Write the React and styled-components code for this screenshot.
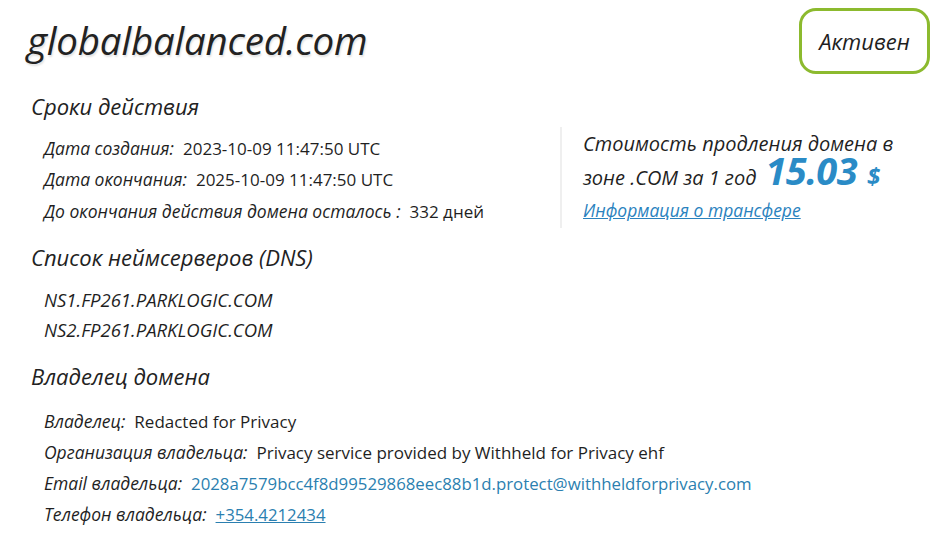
import React from 'react'
import styled, { createGlobalStyle } from 'styled-components'

const GlobalStyle = createGlobalStyle`
  html, body {
    margin: 0;
    padding: 0;
    background: #fff;
  }
  body {
    font-family: 'Open Sans', 'Noto Sans', sans-serif;
    color: #1f1f1f;
  }
`

const Page = styled.div`
  width: 943px;
  height: 539px;
  box-sizing: border-box;
  padding: 8px 13px 0 27px;
  overflow: hidden;
`

const Header = styled.div`
  display: flex;
  justify-content: space-between;
  align-items: flex-start;
`

const DomainTitle = styled.h1`
  margin: 7px 0 0;
  font-size: 38.5px;
  line-height: 50px;
  font-style: italic;
  font-weight: 500;
  letter-spacing: -0.2px;
  color: #222;
  text-shadow: 1px 2px 2px rgba(0, 0, 0, 0.12);
`

const StatusBadge = styled.div`
  box-sizing: border-box;
  width: 131px;
  height: 66px;
  display: flex;
  align-items: center;
  justify-content: center;
  border: 3px solid ${(props) => props.color || '#8cba2e'};
  border-radius: 17px;
  font-size: 22px;
  font-style: italic;
  color: #1f1f1f;
`

const SectionTitle = styled.h2`
  margin: ${(props) => props.top || 0}px 0 0 4px;
  font-size: 22px;
  font-style: italic;
  font-weight: 400;
  color: #222;
  line-height: 30px;
`

const TopGrid = styled.div`
  display: grid;
  grid-template-columns: 533px 1fr;
  margin-top: 12px;
`

const Rows = styled.div`
  display: flex;
  flex-direction: column;
  padding-left: 17px;
  padding-top: ${(props) => props.top || 0}px;
`

const Row = styled.div`
  display: flex;
  align-items: baseline;
  gap: 9px;
  height: ${(props) => props.h || 31}px;
  line-height: ${(props) => props.h || 31}px;
  font-size: 17.5px;
  white-space: nowrap;
`

const Label = styled.span`
  font-style: italic;
  font-weight: 500;
  color: #1f1f1f;
`

const Value = styled.span`
  font-size: 17px;
  color: #1f1f1f;
`

const LinkValue = styled.a`
  font-size: 16.8px;
  color: #2b7fb0;
  text-decoration: ${(props) => (props.underline ? 'underline' : 'none')};
`

const PriceBox = styled.div`
  border-left: 2px solid #efefef;
  padding: 0 0 2px 21px;
  margin-top: -6px;
  font-style: italic;
  font-size: 20px;
  color: #1f1f1f;
`

const PriceLine = styled.div`
  height: ${(props) => props.h || 32}px;
  line-height: ${(props) => props.h || 32}px;
  white-space: nowrap;
`

const Price = styled.span`
  font-size: 38px;
  line-height: 0;
  font-weight: 700;
  color: #2a8bc6;
  margin-left: 9px;
  letter-spacing: -0.6px;
`

const Currency = styled.span`
  font-size: 24px;
  line-height: 0;
  font-weight: 700;
  color: #2a8bc6;
  margin-left: 10px;
`

const TransferLink = styled.a`
  font-size: 17.5px;
  color: #2a82be;
  text-decoration: underline;
`

const NsList = styled.div`
  display: flex;
  flex-direction: column;
  padding-left: 17px;
  margin-top: 13px;
`

const NsItem = styled.div`
  font-size: 18.5px;
  font-style: italic;
  font-weight: 500;
  line-height: 30px;
  color: #1f1f1f;
`

const App = () => {
  return (
    <>
      <GlobalStyle />
      <Page>
        <Header>
          <DomainTitle>globalbalanced.com</DomainTitle>
          <StatusBadge>Активен</StatusBadge>
        </Header>

        <SectionTitle top={17}>Сроки действия</SectionTitle>
        <TopGrid>
          <Rows>
            <Row>
              <Label>Дата создания:</Label>
              <Value>2023-10-09 11:47:50 UTC</Value>
            </Row>
            <Row>
              <Label>Дата окончания:</Label>
              <Value>2025-10-09 11:47:50 UTC</Value>
            </Row>
            <Row h={33}>
              <Label>До окончания действия домена осталось :</Label>
              <Value>332 дней</Value>
            </Row>
          </Rows>
          <PriceBox>
            <PriceLine h={34}>Стоимость продления домена в</PriceLine>
            <PriceLine h={34}>
              зоне .COM за 1 год
              <Price>15.03</Price>
              <Currency>$</Currency>
            </PriceLine>
            <PriceLine h={30}>
              <TransferLink href='#'>Информация о трансфере</TransferLink>
            </PriceLine>
          </PriceBox>
        </TopGrid>

        <SectionTitle top={14}>Список неймсерверов (DNS)</SectionTitle>
        <NsList>
          <NsItem>NS1.FP261.PARKLOGIC.COM</NsItem>
          <NsItem>NS2.FP261.PARKLOGIC.COM</NsItem>
        </NsList>

        <SectionTitle top={16}>Владелец домена</SectionTitle>
        <Rows top={15}>
          <Row>
            <Label>Владелец:</Label>
            <Value>Redacted for Privacy</Value>
          </Row>
          <Row>
            <Label>Организация владельца:</Label>
            <Value>Privacy service provided by Withheld for Privacy ehf</Value>
          </Row>
          <Row>
            <Label>Email владельца:</Label>
            <LinkValue href='#'>
              2028a7579bcc4f8d99529868eec88b1d.protect@withheldforprivacy.com
            </LinkValue>
          </Row>
          <Row>
            <Label>Телефон владельца:</Label>
            <LinkValue href='#' underline>
              +354.4212434
            </LinkValue>
          </Row>
        </Rows>
      </Page>
    </>
  )
}

export default App
